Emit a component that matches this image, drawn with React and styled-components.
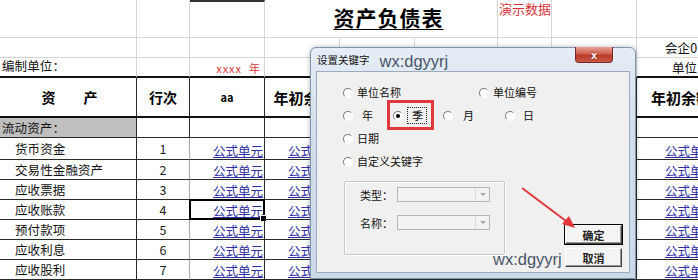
import React from 'react';
import styled, { createGlobalStyle } from 'styled-components';

const GlobalStyle = createGlobalStyle`
  html, body {
    margin: 0;
    padding: 0;
    background: #fff;
  }
  body {
    font-family: "Noto Sans CJK SC", "Liberation Sans", sans-serif;
    overflow: hidden;
  }
`;

const Page = styled.div`
  position: relative;
  width: 698px;
  height: 280px;
  overflow: hidden;
`;

const Sheet = styled.div`
  display: grid;
  grid-template-columns: 137px 53px 75px 75px 75px 83px 54px 85px 80px;
  grid-template-rows: 38px 20px 20px 40px 20px 22px repeat(6, 20px);
  width: 717px;
`;

const GRID = '1px solid #d6d6d6';
const INK = '1px solid #2a2a2a';
const THICK = '2px solid #111';

const Cell = styled.div`
  box-sizing: border-box;
  position: relative;
  display: flex;
  align-items: ${(p) => p.$v || 'center'};
  justify-content: ${(p) => ({ left: 'flex-start', center: 'center', right: 'flex-end' }[p.$align || 'left'])};
  padding: 0 ${(p) => (p.$pr ?? 3)}px 0 ${(p) => (p.$pl ?? 3)}px;
  border-right: ${(p) => p.$br || GRID};
  border-bottom: ${(p) => p.$bb || GRID};
  border-top: ${(p) => p.$bt || 'none'};
  background: ${(p) => p.$bg || 'transparent'};
  grid-column: ${(p) => (p.$span ? `span ${p.$span}` : 'auto')};
  font-size: 12px;
  color: #111;
  white-space: nowrap;
`;

const Title = styled.span`
  font-size: 21px;
  font-weight: 700;
  letter-spacing: 1px;
  text-decoration: underline;
  text-underline-offset: 3px;
  text-decoration-thickness: 1px;
  color: #000;
  margin-top: 2px;
`;

const RedNote = styled.span`
  color: #d9323a;
  font-size: ${(p) => p.$size || 13}px;
  letter-spacing: ${(p) => p.$ls || 0}px;
  white-space: pre;
  line-height: 1;
  margin-top: ${(p) => p.$mt || 0}px;
  margin-bottom: ${(p) => p.$mb || 0}px;
`;

const HeadText = styled.span`
  font-size: ${(p) => p.$size || 14}px;
  font-weight: 700;
  color: #000;
`;

const ItemText = styled.span`
  font-size: 12.5px;
  letter-spacing: 0.1px;
  color: #111;
`;

const NumText = styled.span`
  font-size: 12.5px;
  color: #222;
`;

const Formula = styled.span`
  font-size: 12.5px;
  color: #2f2fa8;
  text-decoration: underline;
  text-underline-offset: 1px;
  line-height: 1;
  margin-bottom: 2px;
`;

const Selected = styled.div`
  position: absolute;
  inset: -1px -1px -1px -1px;
  border: 2px solid #000;
  pointer-events: none;
  &::after {
    content: '';
    position: absolute;
    right: -4px;
    bottom: -4px;
    width: 5px;
    height: 5px;
    background: #000;
    border: 1px solid #fff;
  }
`;

/* ---------- dialog ---------- */

const Dialog = styled.div`
  position: absolute;
  left: 310px;
  top: 47px;
  width: 326px;
  height: 232px;
  box-sizing: border-box;
  border: 1px solid #8194ad;
  border-radius: 6px 6px 0 0;
  background: linear-gradient(180deg, #e6edf6 0%, #d2deeb 35%, #cbd9e9 100%);
  padding: 0 5px 5px;
  display: flex;
  flex-direction: column;
  box-shadow: 0 0 5px rgba(0, 0, 0, 0.28);
`;

const TitleBar = styled.div`
  height: 23px;
  display: flex;
  align-items: center;
  flex-shrink: 0;
`;

const TitleText = styled.span`
  font-size: 10.5px;
  color: #111;
  margin-left: 1px;
`;

const Watermark = styled.span`
  font-family: "Liberation Sans", Arial, sans-serif;
  font-size: 16.5px;
  color: #4a5568;
  margin-left: ${(p) => p.$ml || 0}px;
  margin-top: 3px;
`;

const CloseBtn = styled.div`
  align-self: flex-start;
  margin-left: auto;
  margin-right: 17px;
  margin-top: -1px;
  width: 38px;
  height: 16px;
  box-sizing: border-box;
  border: 1px solid #7a2a2a;
  border-top: none;
  border-radius: 0 0 4px 4px;
  background: linear-gradient(180deg, #e8a195 0%, #d0614f 45%, #bb3a2b 55%, #c95a45 100%);
  display: flex;
  align-items: center;
  justify-content: center;
  color: #fff;
  font-family: "Liberation Sans", Arial, sans-serif;
  font-size: 11px;
  font-weight: 700;
  text-shadow: 0 0 2px #5a1010;
`;

const Body = styled.div`
  position: relative;
  flex: 1;
  background: #f0f0f0;
  border: 1px solid #9aabbf;
  padding-top: 9px;
  box-sizing: border-box;
`;

const RadioRow = styled.div`
  display: flex;
  align-items: center;
  height: 23px;
  padding-left: 26px;
`;

const Option = styled.div`
  display: flex;
  align-items: center;
  width: ${(p) => (p.$w ? `${p.$w}px` : 'auto')};
`;

const Radio = styled.span`
  position: relative;
  width: 10px;
  height: 10px;
  box-sizing: border-box;
  border-radius: 50%;
  border: 1px solid;
  border-color: #7d7d7d #ffffff #ffffff #7d7d7d;
  background: #fff;
  flex-shrink: 0;
  &::after {
    content: '';
    display: ${(p) => (p.$checked ? 'block' : 'none')};
    position: absolute;
    left: 2px;
    top: 2px;
    width: 4px;
    height: 4px;
    border-radius: 50%;
    background: #000;
  }
`;

const OptLabel = styled.span`
  font-size: 11px;
  color: #111;
  margin-left: ${(p) => p.$ml ?? 4}px;
  padding: ${(p) => (p.$focus ? '1px 3px 1px 4px' : '0')};
  border: ${(p) => (p.$focus ? '1px dotted #222' : 'none')};
  line-height: 1.2;
`;

const Lower = styled.div`
  display: flex;
  margin-top: 8px;
`;

const GroupBox = styled.div`
  margin-left: 27px;
  width: 161px;
  height: 74px;
  box-sizing: border-box;
  border: 1px solid #c2c8cf;
  border-radius: 2px;
  box-shadow: inset 1px 1px 0 #fff, 1px 1px 0 #fff;
  padding: 5px 0 0 15px;
  display: flex;
  flex-direction: column;
  gap: 13px;
`;

const FieldRow = styled.div`
  display: flex;
  align-items: center;
  height: 15px;
`;

const FieldLabel = styled.span`
  width: 37px;
  font-size: 11px;
  color: #111;
`;

const Combo = styled.div`
  width: 93px;
  height: 15px;
  box-sizing: border-box;
  border: 1px solid #b5b5b5;
  background: #f3f3f3;
  display: flex;
  justify-content: flex-end;
`;

const ComboArrow = styled.div`
  width: 13px;
  border-left: 1px solid #dcdcdc;
  display: flex;
  align-items: center;
  justify-content: center;
  &::after {
    content: '';
    border-left: 3px solid transparent;
    border-right: 3px solid transparent;
    border-top: 3px solid #a8a8a8;
  }
`;

const Buttons = styled.div`
  margin-left: 60px;
  margin-top: 44px;
  display: flex;
  flex-direction: column;
  gap: 4px;
`;

const Button = styled.div`
  width: 57px;
  height: 19px;
  box-sizing: border-box;
  display: flex;
  align-items: center;
  justify-content: center;
  font-size: 11px;
  font-weight: 700;
  color: #222;
  background: #f4f4f4;
  border: 1px solid;
  border-color: #ffffff #404040 #404040 #ffffff;
  box-shadow: ${(p) => (p.$default ? '0 0 0 1px #000, inset -1px -1px 0 #9a9a9a' : 'inset -1px -1px 0 #9a9a9a')};
`;

const WatermarkLow = styled(Watermark)`
  position: absolute;
  left: 176px;
  top: 178px;
  margin: 0;
`;

/* ---------- annotations ---------- */

const RedBox = styled.div`
  position: absolute;
  left: 387px;
  top: 100px;
  width: 47px;
  height: 30px;
  box-sizing: border-box;
  border: 3px solid #e2383d;
`;

const Arrow = styled.svg`
  position: absolute;
  left: 515px;
  top: 182px;
  width: 66px;
  height: 52px;
  overflow: visible;
`;

const items = [
  ['货币资金', '1'],
  ['交易性金融资产', '2'],
  ['应收票据', '3'],
  ['应收账款', '4', true],
  ['预付款项', '5'],
  ['应收利息', '6'],
  ['应收股利', '7'],
];

function Blank({ n, ...rest }) {
  return Array.from({ length: n }, (_, i) => <Cell key={i} {...rest} />);
}

export default function App() {
  return (
    <Page>
      <GlobalStyle />
      <Sheet>
        {/* row 1: title */}
        <Cell />
        <Cell />
        <Cell $bt="2px solid #333" />
        <Cell $span={3} $align="center" $v="flex-start" $pl={18}>
          <Title>资产负债表</Title>
        </Cell>
        <Cell $v="flex-start" $pl={1}>
          <RedNote $mt={2}>演示数据</RedNote>
        </Cell>
        <Cell />
        <Cell />

        {/* row 2 */}
        <Blank n={8} />
        <Cell $pl={28}><ItemText>会企01表</ItemText></Cell>

        {/* row 3 */}
        <Cell $bb={THICK} $v="flex-end" $pl={2}><ItemText style={{ marginBottom: 1 }}>编制单位：</ItemText></Cell>
        <Cell $bb={THICK} />
        <Cell $bb={THICK} $align="right" $v="flex-end" $pr={3}>
          <RedNote $size={11} $ls={1} $mb={2}>xxxx  年</RedNote>
        </Cell>
        <Blank n={5} $bb={THICK} />
        <Cell $bb={THICK} $pl={35}><ItemText>单位：元</ItemText></Cell>

        {/* header */}
        <Cell $bb={THICK} $br={INK} $align="center" $pl={6}><HeadText>资　　产</HeadText></Cell>
        <Cell $bb={THICK} $br={INK} $align="center"><HeadText>行次</HeadText></Cell>
        <Cell $bb={THICK} $br={INK} $align="center"><HeadText $size={11}>aa</HeadText></Cell>
        <Cell $bb={THICK} $br={INK} $align="center" $pl={6}><HeadText $size={15}>年初余额</HeadText></Cell>
        <Blank n={4} $bb={THICK} $br={INK} />
        <Cell $bb={THICK} $br={INK} $pl={14}><HeadText $size={15}>年初余额</HeadText></Cell>

        {/* 流动资产 */}
        <Cell $bb={INK} $br={INK} $bg="#bfbfbf" $pl={2}><ItemText>流动资产：</ItemText></Cell>
        <Blank n={8} $bb={INK} $br={INK} />

        {items.map(([name, no, sel]) => (
          <React.Fragment key={name}>
            <Cell $bb={INK} $br={INK} $pl={15}><ItemText>{name}</ItemText></Cell>
            <Cell $bb={INK} $br="1px solid #a8a8a8" $align="center"><NumText>{no}</NumText></Cell>
            <Cell $bb={INK} $br={INK} $align="right" $v="flex-end" $pr={1}>
              <Formula>公式单元</Formula>
              {sel && <Selected />}
            </Cell>
            <Cell $bb={INK} $br={INK} $align="right" $v="flex-end" $pr={1}><Formula>公式单元</Formula></Cell>
            <Blank n={4} $bb={INK} $br={INK} />
            <Cell $bb={INK} $br={INK} $align="right" $v="flex-end" $pr={1}><Formula>公式单元</Formula></Cell>
          </React.Fragment>
        ))}
      </Sheet>

      <Dialog>
        <TitleBar>
          <TitleText>设置关键字</TitleText>
          <Watermark $ml={10}>wx:dgyyrj</Watermark>
          <CloseBtn>x</CloseBtn>
        </TitleBar>
        <Body>
          <RadioRow>
            <Option $w={136}><Radio /><OptLabel>单位名称</OptLabel></Option>
            <Option><Radio /><OptLabel>单位编号</OptLabel></Option>
          </RadioRow>
          <RadioRow>
            <Option $w={50}><Radio /><OptLabel $ml={9}>年</OptLabel></Option>
            <Option $w={50}><Radio $checked /><OptLabel $focus>季</OptLabel></Option>
            <Option $w={62}><Radio /><OptLabel $ml={10}>月</OptLabel></Option>
            <Option><Radio /><OptLabel $ml={8}>日</OptLabel></Option>
          </RadioRow>
          <RadioRow>
            <Option><Radio /><OptLabel>日期</OptLabel></Option>
          </RadioRow>
          <RadioRow>
            <Option><Radio /><OptLabel>自定义关键字</OptLabel></Option>
          </RadioRow>
          <Lower>
            <GroupBox>
              <FieldRow>
                <FieldLabel>类型：</FieldLabel>
                <Combo><ComboArrow /></Combo>
              </FieldRow>
              <FieldRow>
                <FieldLabel>名称：</FieldLabel>
                <Combo><ComboArrow /></Combo>
              </FieldRow>
            </GroupBox>
            <Buttons>
              <Button $default>确定</Button>
              <Button>取消</Button>
            </Buttons>
          </Lower>
          <WatermarkLow>wx:dgyyrj</WatermarkLow>
        </Body>
      </Dialog>

      <RedBox />
      <Arrow viewBox="0 0 66 52">
        <line x1="7" y1="6" x2="55" y2="42" stroke="#e2383d" strokeWidth="2" />
        <polygon points="60,46 47,42 54,34" fill="#e2383d" />
      </Arrow>
    </Page>
  );
}
